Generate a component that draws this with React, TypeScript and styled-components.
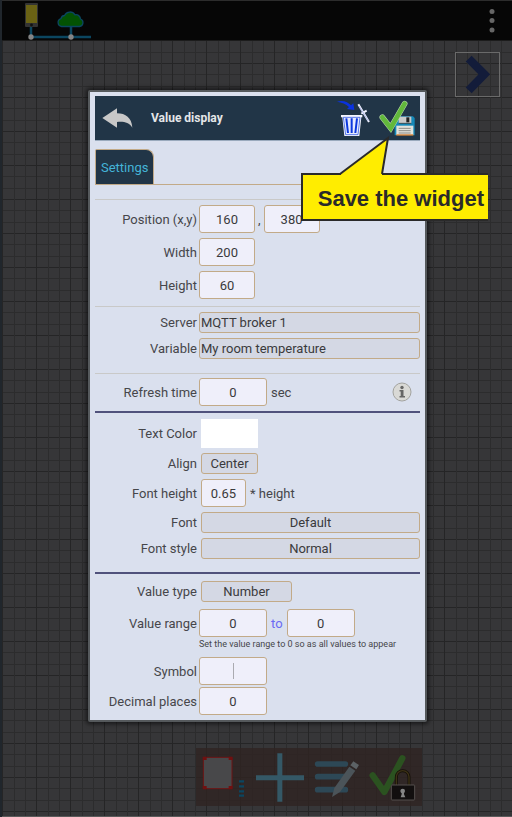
import React from 'react';
import styled, { createGlobalStyle } from 'styled-components';

const GlobalStyle = createGlobalStyle`
  *, *::before, *::after { box-sizing: border-box; }
  body { margin: 0; background: #343436; }
  body, button, input, select { font-family: Roboto, "Noto Sans", sans-serif; font-size: 13px; }
`;

const TAN = '#c2aa88';

const Page = styled.div`
  display: grid;
  min-height: 100vh;
  border-left: 2px solid #20262c;
  color: #46464a;
`;

const Backdrop = styled.div`
  grid-area: 1 / 1;
  display: flex;
  flex-direction: column;
  min-width: 0;
`;

const TopBar = styled.header`
  display: flex;
  justify-content: space-between;
  align-items: flex-start;
  height: 41px;
  padding: 0 16px 0 22px;
  background: #060606;
  border-top: 1px solid #2c2c2c;
  border-bottom: 1px solid #1c1c1c;
`;

const GRID_LINE = '#2c2c2d';
const GRID_STRONG = '#252526';

const Canvas = styled.main`
  flex: 1;
  display: flex;
  flex-direction: column;
  align-items: flex-end;
  padding: 11px 12px 10px 0;
  border-bottom: 1px solid #5a5a5a;
  background-color: #363638;
  background-image:
    linear-gradient(90deg, ${GRID_STRONG} 1px, transparent 1px 12px, ${GRID_LINE} 12px 13px, transparent 13px 23px, ${GRID_LINE} 23px 24px, transparent 24px),
    linear-gradient(${GRID_STRONG} 1px, transparent 1px 11px, ${GRID_LINE} 11px 12px, transparent 12px 23px, ${GRID_LINE} 23px 24px, transparent 24px);
  background-size: 34px 34px;
  background-position: 0 22px;
`;

const IconButton = styled.button`
  display: flex;
  align-items: center;
  justify-content: center;
  padding: 0;
  border: 0;
  background: none;
  cursor: pointer;
  svg { display: block; }
`;

const NextButton = styled(IconButton)`
  width: 45px;
  height: 45px;
  border: 1px solid #6a6a6a;
`;

const ToolBar = styled.nav`
  display: flex;
  gap: 9px;
  margin-top: auto;
  margin-right: 78px;
  padding: 4px 6px 4px 5px;
  background: rgba(48, 36, 34, 0.8);
`;

const DialogLayer = styled.div`
  grid-area: 1 / 1;
  display: flex;
  align-items: flex-start;
  justify-content: center;
  padding: 90px 85px 40px 86px;
  z-index: 1;
  pointer-events: none;
`;

const Dialog = styled.section`
  position: relative;
  flex: 1;
  max-width: 480px;
  padding: 4px 5px 5px;
  background: #dae0ee;
  border: 2px solid #55595c;
  border-radius: 2px;
  box-shadow: 0 0 4px 2px rgba(0, 0, 0, 0.55);
  pointer-events: auto;
`;

const DialogHeader = styled.header`
  display: flex;
  align-items: center;
  height: 45px;
  padding: 0 4px 0 7px;
  background: #213547;
  border-bottom: 1px solid #9aaabd;
`;

const Title = styled.h1`
  flex: 1;
  margin: 0 0 0 17px;
  font-size: 12px;
  font-weight: 700;
  color: #e4e6e8;
`;

const HeaderActions = styled.div`
  display: flex;
  gap: 8px;
`;

const TabBar = styled.div`
  display: flex;
  margin: 8px 0 14px;
  border-bottom: 1px solid ${TAN};
`;

const Tab = styled.button`
  height: 35px;
  padding: 0 5px;
  border: 1px solid ${TAN};
  border-bottom-width: 0;
  border-radius: 2px 8px 0 0;
  background: #213547;
  color: #44b4d8;
`;

const Divider = styled.hr<{ $strong?: boolean }>`
  height: ${p => (p.$strong ? 2 : 1)}px;
  margin: 0;
  border: 0;
  background: ${p => (p.$strong ? '#50527c' : '#c9c9c8')};
`;

const Group = styled.div<{ $top: number; $bottom: number; $gap?: number }>`
  display: flex;
  flex-direction: column;
  gap: ${p => p.$gap ?? 5}px;
  padding: ${p => p.$top}px 0 ${p => p.$bottom}px;
`;

const Row = styled.div<{ $inset?: boolean }>`
  display: grid;
  grid-template-columns: 102px minmax(0, 1fr);
  column-gap: ${p => (p.$inset ? 4 : 2)}px;
  align-items: center;
`;

const Label = styled.label`
  text-align: right;
  white-space: nowrap;
`;

const Controls = styled.div<{ $gap?: number }>`
  display: flex;
  align-items: center;
  gap: ${p => p.$gap ?? 4}px;
`;

const TextBox = styled.input<{ $width: number; $caret?: boolean }>`
  width: ${p => p.$width}px;
  height: 28px;
  padding: 0;
  border: 1px solid ${TAN};
  border-radius: 3px;
  background: ${p =>
    p.$caret
      ? 'linear-gradient(#aaaab0, #aaaab0) center / 1px 16px no-repeat #efeffa'
      : '#efeffa'};
  color: #3a3a3c;
  text-align: center;
`;

const Picker = styled.select<{ $width?: number; $left?: boolean }>`
  appearance: none;
  width: ${p => (p.$width ? `${p.$width}px` : '100%')};
  height: 21px;
  padding: 0 1px;
  border: 1px solid ${TAN};
  border-radius: 3px;
  background: #d4d8e4;
  color: #3a3a3c;
  text-align: ${p => (p.$left ? 'left' : 'center')};
  text-align-last: ${p => (p.$left ? 'left' : 'center')};
`;

const ColorBox = styled.input`
  appearance: none;
  width: 57px;
  height: 29px;
  padding: 0;
  border: 0;
  background: #fff;
  &::-webkit-color-swatch-wrapper { padding: 0; }
  &::-webkit-color-swatch { border: 0; }
`;

const ToLabel = styled.label`
  color: #6a6af4;
`;

const InfoButton = styled(IconButton)`
  margin: 0 8px 0 auto;
`;

const Note = styled.p`
  grid-column: 2;
  margin: 2px 0 0;
  font-size: 9px;
  line-height: 11px;
  white-space: nowrap;
`;

const Callout = styled.div`
  position: absolute;
  top: 81px;
  right: -63px;
  padding: 4px 4px 0 15px;
  border: 2px solid #2a2a2a;
  border-right: 0;
  background: #ffed00;
  color: #2a2a2a;
  font: bold 22px/40px "Liberation Sans", Arial, sans-serif;
  white-space: nowrap;
`;

const Pointer = styled.svg`
  position: absolute;
  left: 34px;
  top: -42px;
`;

const NetworkIcon = () => (
  <svg width="72" height="39" viewBox="0 0 72 39" aria-hidden="true">
    <path d="M7 25v11M47 25v11M7 36h60" stroke="#0b4660" strokeWidth="2.500" fill="none" />
    <rect x="1" y="2" width="13" height="24" rx="1" fill="#333" />
    <rect x="2" y="4" width="11" height="18" fill="#6a6214" />
    <circle cx="7.5" cy="24" r="1.4" fill="#111" />
    <path d="M37.5 25.5a4 4 0 0 1-.5-7.8 4 4 0 0 1 3.500-3.200 6 6 0 0 1 10.500-.700 4.500 4.500 0 0 1 5.500 4.200 3.900 3.900 0 0 1-1 7.500z" fill="#035203" stroke="#0b4660" strokeWidth="1.300" />
    <circle cx="7" cy="36" r="2.700" fill="#858585" />
    <circle cx="47" cy="36" r="2.700" fill="#858585" />
  </svg>
);

const MoreIcon = () => (
  <svg width="8" height="36" viewBox="0 0 8 36" aria-hidden="true" fill="#666">
    <circle cx="4" cy="10.500" r="2.500" />
    <circle cx="4" cy="19.500" r="2.500" />
    <circle cx="4" cy="29" r="2.500" />
  </svg>
);

const NextIcon = () => (
  <svg width="43" height="43" viewBox="0 0 129 129" aria-hidden="true">
    <path d="M38 17 85 64 38 112" stroke="#131c3a" strokeWidth="25" fill="none" />
  </svg>
);

const BackIcon = () => (
  <svg width="32" height="22" viewBox="51 68 96 66" aria-hidden="true">
    <path d="M52 101 96 72V87C122 87 140 100 142 130 132 114 116 111 96 113V130Z" fill="#c8c8c8" />
  </svg>
);

const TrashIcon = () => (
  <svg width="35" height="40" viewBox="135 40 105 120" aria-hidden="true">
    <path d="M138 51C154 45 172 51 180 62L187 56 190 76 168 73 174 67C165 57 152 53 138 51Z" fill="#0a32e0" />
    <path d="M202 59 234 112M211 87 227 78" stroke="#f2f4ff" strokeWidth="6" fill="none" />
    <path d="M204 64 232 109" stroke="#2745c0" strokeWidth="1" />
    <path d="M150 91H214V98H211L205 154H160L154 98H150Z" fill="#f4f6ff" />
    <path d="M157 98H207L201 150H164Z" fill="#e5eaff" stroke="#1340dc" strokeWidth="2" />
    <path d="M166 101 171 145M182 101V145M198 101 193 145" stroke="#0b37de" strokeWidth="6" />
  </svg>
);

const SaveIcon = () => (
  <svg width="37" height="40" viewBox="265 40 111 120" aria-hidden="true">
    <path d="M316 95H367L372 100V152H312V99Z" fill="#1488b8" />
    <rect x="324" y="96" width="38" height="20" fill="#c9c9c9" />
    <rect x="347" y="98" width="9" height="15" fill="#222" />
    <path d="M324 116H362" stroke="#222" strokeWidth="2" />
    <rect x="317" y="123" width="51" height="28" fill="#e2e2dc" />
    <path d="M324 131H360M324 138H360M324 145H360" stroke="#8b8b86" strokeWidth="3" />
    <rect x="317" y="149" width="51" height="4" fill="#d67b2c" />
    <path d="M275 98 300 130 342 57" stroke="#b9d9ac" strokeWidth="17" strokeLinecap="round" fill="none" />
    <path d="M275 98 300 130 342 57" stroke="#62b83c" strokeWidth="14" strokeLinecap="round" fill="none" />
  </svg>
);

const InfoIcon = () => (
  <svg width="20" height="20" viewBox="0 0 20 20" aria-hidden="true">
    <circle cx="10" cy="10" r="9" fill="#d9d9d6" stroke="#a3a39f" />
    <circle cx="10" cy="5.500" r="1.700" fill="#666" />
    <path d="M7.500 8H11.500V14H13V15.500H7.500V14H8.700V9.500H7.500Z" fill="#666" />
  </svg>
);

const WidgetIcon = () => (
  <svg width="45" height="50" viewBox="60 50 135 150" aria-hidden="true">
    <rect x="67" y="66" width="86" height="94" rx="5" fill="#48484a" stroke="#6d1414" strokeWidth="3" />
    <path d="M65 64h12v10H65zM143 64h12v10h-12zM65 152h12v10H65zM143 152h12v10h-12z" fill="#701010" />
    <path d="M174 138h15M174 153h15M174 168h15M174 181h15" stroke="#0b4660" strokeWidth="7" />
  </svg>
);

const AddIcon = () => (
  <svg width="50" height="50" viewBox="225 50 150 150" aria-hidden="true">
    <path d="M228 127H372M299.500 54V199" stroke="#345866" strokeWidth="15" />
  </svg>
);

const EditIcon = () => (
  <svg width="46" height="50" viewBox="402 50 138 150" aria-hidden="true">
    <path d="M413 86H496M413 124H496M413 163H496" stroke="#2d4856" strokeWidth="17" strokeLinecap="round" />
    <path d="M456 185 463 158 508 94 526 106 480 170Z" fill="#4b5459" />
    <path d="M511 90 520 78 537 89 529 102Z" fill="#5c6265" />
  </svg>
);

const LockIcon = () => (
  <svg width="47" height="50" viewBox="567 50 141 150" aria-hidden="true">
    <path d="M578 120 613 170 667 69" stroke="#2b5220" strokeWidth="19" strokeLinecap="round" strokeLinejoin="round" fill="none" />
    <path d="M649 149V125a18 18 0 0 1 38 0V149" stroke="#151008" strokeWidth="9" fill="none" />
    <path d="M649 149V125a18 18 0 0 1 38 0V149" stroke="#3d3216" strokeWidth="4" fill="none" />
    <rect x="634" y="149" width="70" height="45" rx="2" fill="#120f0f" stroke="#55504e" strokeWidth="3" />
    <circle cx="668" cy="167" r="7" fill="#858585" />
    <path d="M665 168h7v9l4 9h-14l3-9z" fill="#858585" />
  </svg>
);

interface PickerRowProps {
  id: string;
  label: string;
  value: string;
  width?: number;
  left?: boolean;
}

const PickerRow = ({ id, label, value, width, left }: PickerRowProps) => (
  <Row $inset={!left}>
    <Label htmlFor={id}>{label}</Label>
    <Picker id={id} $width={width} $left={left} defaultValue={value}>
      <option>{value}</option>
    </Picker>
  </Row>
);

export default function App() {
  return (
    <>
      <GlobalStyle />
      <Page>
        <Backdrop>
          <TopBar>
            <NetworkIcon />
            <IconButton aria-label="Menu"><MoreIcon /></IconButton>
          </TopBar>
          <Canvas>
            <NextButton aria-label="Next page"><NextIcon /></NextButton>
            <ToolBar>
              <IconButton aria-label="Select widget"><WidgetIcon /></IconButton>
              <IconButton aria-label="Add widget"><AddIcon /></IconButton>
              <IconButton aria-label="Edit page"><EditIcon /></IconButton>
              <IconButton aria-label="Finish and lock"><LockIcon /></IconButton>
            </ToolBar>
          </Canvas>
        </Backdrop>

        <DialogLayer>
          <Dialog role="dialog" aria-labelledby="dialog-title">
            <DialogHeader>
              <IconButton aria-label="Back"><BackIcon /></IconButton>
              <Title id="dialog-title">Value display</Title>
              <HeaderActions>
                <IconButton aria-label="Delete the widget"><TrashIcon /></IconButton>
                <IconButton aria-label="Save"><SaveIcon /></IconButton>
              </HeaderActions>
            </DialogHeader>

            <TabBar role="tablist">
              <Tab role="tab" aria-selected="true">Settings</Tab>
            </TabBar>

            <Divider />
            <Group $top={5} $bottom={7}>
              <Row>
                <Label htmlFor="pos-x">Position (x,y)</Label>
                <Controls $gap={3}>
                  <TextBox id="pos-x" $width={56} defaultValue="160" />
                  <span>,</span>
                  <TextBox aria-label="Position y" $width={56} defaultValue="380" />
                </Controls>
              </Row>
              <Row>
                <Label htmlFor="width">Width</Label>
                <TextBox id="width" $width={56} defaultValue="200" />
              </Row>
              <Row>
                <Label htmlFor="height">Height</Label>
                <TextBox id="height" $width={56} defaultValue="60" />
              </Row>
            </Group>

            <Divider />
            <Group $top={5} $bottom={14}>
              <PickerRow id="server" label="Server" value="MQTT broker 1" left />
              <PickerRow id="variable" label="Variable" value="My room temperature" left />
            </Group>

            <Divider />
            <Group $top={4} $bottom={5}>
              <Row>
                <Label htmlFor="refresh">Refresh time</Label>
                <Controls>
                  <TextBox id="refresh" $width={68} defaultValue="0" />
                  <span>sec</span>
                  <InfoButton aria-label="About refresh time"><InfoIcon /></InfoButton>
                </Controls>
              </Row>
            </Group>

            <Divider $strong />
            <Group $top={6} $bottom={13}>
              <Row $inset>
                <Label htmlFor="color">Text Color</Label>
                <ColorBox id="color" type="color" defaultValue="#ffffff" />
              </Row>
              <PickerRow id="align" label="Align" value="Center" width={57} />
              <Row $inset>
                <Label htmlFor="font-height">Font height</Label>
                <Controls>
                  <TextBox id="font-height" $width={45} defaultValue="0.65" />
                  <span>* height</span>
                </Controls>
              </Row>
              <PickerRow id="font" label="Font" value="Default" />
              <PickerRow id="font-style" label="Font style" value="Normal" />
            </Group>

            <Divider $strong />
            <Group $top={7} $bottom={7} $gap={7}>
              <PickerRow id="value-type" label="Value type" value="Number" width={91} />
              <Row>
                <Label htmlFor="range-from">Value range</Label>
                <Controls>
                  <TextBox id="range-from" $width={68} defaultValue="0" />
                  <ToLabel htmlFor="range-to">to</ToLabel>
                  <TextBox id="range-to" $width={68} defaultValue="0" />
                </Controls>
                <Note>Set the value range to 0 so as all values to appear</Note>
              </Row>
            </Group>
            <Group $top={0} $bottom={0} $gap={2}>
              <Row>
                <Label htmlFor="symbol">Symbol</Label>
                <TextBox id="symbol" $width={68} $caret />
              </Row>
              <Row>
                <Label htmlFor="decimals">Decimal places</Label>
                <TextBox id="decimals" $width={68} defaultValue="0" />
              </Row>
            </Group>

            <Callout role="tooltip">
              Save the widget
              <Pointer width="56" height="44" viewBox="0 0 56 44" aria-hidden="true">
                <path d="M4 41 51 5 45 41V44H4Z" fill="#ffed00" />
                <path d="M3 41 51 5 45 41" fill="none" stroke="#2a2a2a" strokeWidth="2" />
              </Pointer>
            </Callout>
          </Dialog>
        </DialogLayer>
      </Page>
    </>
  );
}
